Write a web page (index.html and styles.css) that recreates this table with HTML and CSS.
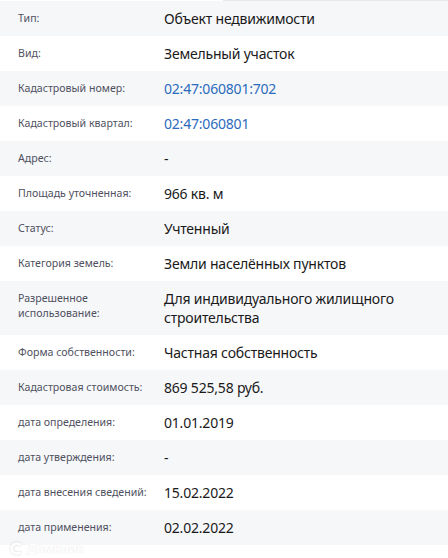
FILE: index.html
```html
<!DOCTYPE html>
<html lang="ru">
<head>
<meta charset="utf-8">
<title>Объект недвижимости</title>
<link rel="stylesheet" href="styles.css">
</head>
<body>
<div class="page">
  <div class="topline"></div>
  <div class="list">
    <div class="row alt"><div class="label">Тип:</div><div class="value">Объект недвижимости</div></div>
    <div class="row"><div class="label">Вид:</div><div class="value">Земельный участок</div></div>
    <div class="row alt"><div class="label">Кадастровый номер:</div><div class="value link">02:47:060801:702</div></div>
    <div class="row"><div class="label">Кадастровый квартал:</div><div class="value link">02:47:060801</div></div>
    <div class="row alt"><div class="label">Адрес:</div><div class="value">-</div></div>
    <div class="row"><div class="label">Площадь уточненная:</div><div class="value">966 кв. м</div></div>
    <div class="row alt"><div class="label">Статус:</div><div class="value">Учтенный</div></div>
    <div class="row"><div class="label">Категория земель:</div><div class="value">Земли населённых пунктов</div></div>
    <div class="row alt"><div class="label">Разрешенное<br>использование:</div><div class="value">Для индивидуального жилищного строительства</div></div>
    <div class="row"><div class="label">Форма собственности:</div><div class="value">Частная собственность</div></div>
    <div class="row alt"><div class="label">Кадастровая стоимость:</div><div class="value">869 525,58 руб.</div></div>
    <div class="row"><div class="label">дата определения:</div><div class="value">01.01.2019</div></div>
    <div class="row alt"><div class="label">дата утверждения:</div><div class="value">-</div></div>
    <div class="row"><div class="label">дата внесения сведений:</div><div class="value">15.02.2022</div></div>
    <div class="row alt"><div class="label">дата применения:</div><div class="value">02.02.2022</div></div>
  </div>
  <div class="wm-dom">
    <svg class="wm-icon" width="13" height="13" viewBox="0 0 13 13"><path d="M10.5 3.2 A5 5 0 1 0 10.5 9.8" fill="none" stroke="#fff" stroke-width="2.6"/></svg>
    <span>Домклик</span>
  </div>
</div>
</body>
</html>
```

FILE: styles.css
```css
html, body {
  margin: 0;
  padding: 0;
  background: #ffffff;
}
.page {
  position: relative;
  width: 448px;
  height: 558px;
  overflow: hidden;
  font-family: "Noto Sans", "Open Sans", sans-serif;
}
.topline {
  height: 1px;
  margin-left: 223px;
  background: #e6e8ec;
}
.list {
  display: flex;
  flex-direction: column;
}
.row {
  display: grid;
  grid-template-columns: 146px 1fr;
  padding: 8px 20px 8px 18px;
  min-height: 19px;
}
.row.alt {
  background: #f6f7f9;
}
.label {
  font-size: 10.6px;
  line-height: 15px;
  color: #4f5060;
  padding-top: 2px;
}
.value {
  font-size: 14px;
  line-height: 19px;
  letter-spacing: -0.2px;
  color: #1a1a1a;
}
.value.link {
  color: #2b6bbd;
}
.wm-dom {
  position: absolute;
  left: 10px;
  top: 540px;
  display: flex;
  align-items: center;
  gap: 4px;
  color: #ffffff;
  font-size: 12px;
  font-weight: 700;
  text-shadow: 0 0 1px rgba(0, 0, 0, 0.15);
}
.wm-icon {
  filter: drop-shadow(0 0 1px rgba(0, 0, 0, 0.18));
}
```
